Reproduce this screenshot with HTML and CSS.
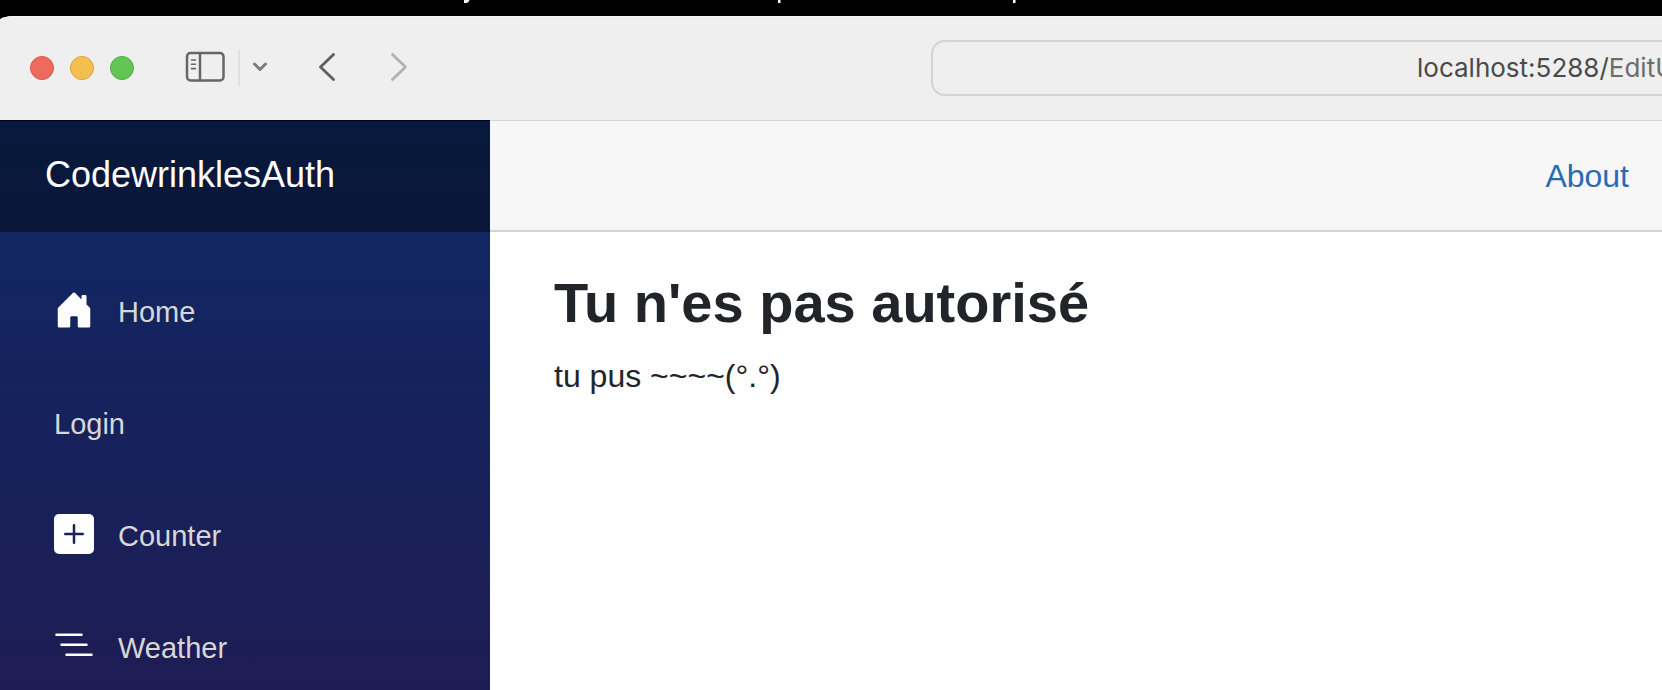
FILE: index.html
```html
<!DOCTYPE html>
<html lang="fr">
<head>
<meta charset="utf-8">
<title>CodewrinklesAuth</title>
<link rel="stylesheet" href="styles.css">
</head>
<body>
<div class="desktop" aria-hidden="true">
  <svg class="desktop-marks" width="600" height="4" viewBox="0 0 600 4" fill="#fff">
    <path d="M4 0h5.500q-1 3-3.500 3H4V1.500Z"/>
    <rect x="318" width="2.500" height="3"/>
    <rect x="553" width="2.500" height="3"/>
  </svg>
</div>
<div class="window">
  <header class="toolbar">
    <div class="lights">
      <button class="light light-close" aria-label="Close"></button>
      <button class="light light-min" aria-label="Minimize"></button>
      <button class="light light-max" aria-label="Zoom"></button>
    </div>
    <button class="tool tool-sidebar" aria-label="Show sidebar">
      <svg width="40" height="32" viewBox="0 0 40 32" fill="none" stroke="#666" stroke-width="2.500" stroke-linecap="round">
        <rect x="2" y="2" width="36.500" height="27.500" rx="3.500"/>
        <path d="M15 2v27.500"/>
        <path stroke-width="1.600" d="M6.500 9h4M6.500 13.300h4M6.500 17.600h4"/>
      </svg>
    </button>
    <span class="divider"></span>
    <button class="tool tool-menu" aria-label="Tab groups">
      <svg width="16" height="12" viewBox="0 0 16 12" fill="none" stroke="#7b7b83" stroke-width="3" stroke-linecap="round" stroke-linejoin="round"><path d="M2.500 3l5.500 5.500L13.500 3"/></svg>
    </button>
    <button class="tool tool-back" aria-label="Back">
      <svg width="18" height="32" viewBox="0 0 18 32" fill="none" stroke="#606060" stroke-width="2.900" stroke-linecap="round" stroke-linejoin="round"><path d="M15.500 3.500L2.500 16l13 12.500"/></svg>
    </button>
    <button class="tool tool-forward" aria-label="Forward" disabled>
      <svg width="18" height="32" viewBox="0 0 18 32" fill="none" stroke="#b2b2b2" stroke-width="2.900" stroke-linecap="round" stroke-linejoin="round"><path d="M2.500 3.500l13 12.500-13 12.500"/></svg>
    </button>
    <button class="address"><span class="host">localhost:5288/</span><span class="path">EditU</span></button>
  </header>
  <div class="page">
    <div class="sidebar">
      <div class="brand-row"><a class="brand" href="#">CodewrinklesAuth</a></div>
      <nav class="nav">
        <a class="nav-link" href="#">
          <svg class="nav-icon" viewBox="0 0 16 16"><path d="M6.500 14.500v-3.505c0-.245.25-.495.5-.495h2c.25 0 .5.25.5.5v3.500a.5.5 0 0 0 .5.5h4a.5.5 0 0 0 .5-.5v-7a.5.5 0 0 0-.146-.354L13 5.793V2.500a.5.5 0 0 0-.5-.5h-1a.5.5 0 0 0-.5.5v1.293L8.354 1.146a.5.5 0 0 0-.708 0l-6 6A.5.5 0 0 0 1.500 7.500v7a.5.5 0 0 0 .5.5h4a.5.5 0 0 0 .5-.5Z"/></svg>
          <span>Home</span>
        </a>
        <a class="nav-link" href="#"><span>Login</span></a>
        <a class="nav-link" href="#">
          <svg class="nav-icon" viewBox="0 0 16 16"><path d="M2 0a2 2 0 0 0-2 2v12a2 2 0 0 0 2 2h12a2 2 0 0 0 2-2V2a2 2 0 0 0-2-2H2zm6.500 4.500v3h3a.5.5 0 0 1 0 1h-3v3a.5.5 0 0 1-1 0v-3h-3a.5.5 0 0 1 0-1h3v-3a.5.5 0 0 1 1 0z"/></svg>
          <span>Counter</span>
        </a>
        <a class="nav-link" href="#">
          <svg class="nav-icon" viewBox="0 0 16 16"><path d="M4.500 11.500A.5.5 0 0 1 5 11h10a.5.5 0 0 1 0 1H5a.5.5 0 0 1-.5-.5zm-2-4A.5.5 0 0 1 3 7h10a.5.5 0 0 1 0 1H3a.5.5 0 0 1-.5-.5zm-2-4A.5.5 0 0 1 1 3h10a.5.5 0 0 1 0 1H1a.5.5 0 0 1-.5-.5z"/></svg>
          <span>Weather</span>
        </a>
      </nav>
    </div>
    <main class="main">
      <div class="top-row"><a class="about" href="#">About</a></div>
      <article class="content">
        <h1 class="title">Tu n'es pas autorisé</h1>
        <p class="text">tu pus ~~~~(°.°)</p>
      </article>
    </main>
  </div>
</div>
</body>
</html>
```
FILE: styles.css
```css
* {
  box-sizing: border-box;
}

body {
  margin: 0;
  height: 100vh;
  overflow: hidden;
  display: flex;
  flex-direction: column;
  background: #000;
  font-family: "Liberation Sans", Arial, sans-serif;
  font-size: 32px;
  color: #212529;
}

button {
  padding: 0;
  border: 0;
  background: none;
  font: inherit;
}

a {
  text-decoration: none;
}

svg {
  display: block;
}

.desktop {
  height: 16px;
  flex: none;
  padding-left: 460px;
  overflow: hidden;
}

.window {
  flex: 1;
  min-height: 0;
  display: flex;
  flex-direction: column;
  background: #fff;
  border-top-left-radius: 16px 4px;
  overflow: hidden;
}

.toolbar {
  flex: none;
  height: 104px;
  display: flex;
  align-items: center;
  padding-left: 30px;
  background: #efefef;
  box-shadow: inset 0 1px #f8f8f8;
}

.lights {
  display: flex;
  gap: 16px;
}

.light {
  width: 24px;
  height: 24px;
  border-radius: 50%;
}

.light-close {
  background: #ed6a5e;
  border: 1px solid #d9564b;
}

.light-min {
  background: #f5bf4f;
  border: 1px solid #d9a23d;
}

.light-max {
  background: #62c655;
  border: 1px solid #4fac41;
}

.tool {
  flex: none;
  padding-bottom: 2px;
}

.tool-sidebar {
  margin-left: 51px;
}

.divider {
  width: 2px;
  height: 36px;
  margin: 0 12px 0 13px;
  background: #dfdfdf;
}

.tool-back {
  margin-left: 50px;
}

.tool-forward {
  margin-left: 54px;
}

.address {
  flex: 1;
  min-width: 0;
  height: 56px;
  margin-left: 523px;
  padding-left: 484px;
  display: flex;
  align-items: center;
  overflow: hidden;
  border: 2px solid #d2d2d2;
  border-right: 0;
  border-radius: 14px 0 0 14px;
  font-family: Inter, sans-serif;
  font-size: 26px;
  line-height: 32px;
  white-space: nowrap;
}

.host {
  color: #4a4a4a;
}

.path {
  color: #6c6c6c;
}

.page {
  flex: 1;
  min-height: 0;
  display: flex;
}

.sidebar {
  flex: none;
  width: 490px;
  background: linear-gradient(180deg, #0c2a64 0%, #122661 22%, #1e1c54 100%);
}

.brand-row {
  height: 112px;
  display: flex;
  align-items: center;
  padding-left: 45px;
  box-shadow: inset 0 1px #000317;
  background: rgba(0, 0, 0, 0.4);
}

.brand {
  padding-bottom: 2px;
  font-size: 36px;
  line-height: 48px;
  color: #fff;
}

.nav {
  display: flex;
  flex-direction: column;
  gap: 16px;
  padding: 32px 24px 0;
}

.nav-link {
  height: 96px;
  flex: none;
  display: flex;
  align-items: center;
  gap: 24px;
  padding-left: 30px;
  font-size: 29px;
  line-height: 96px;
  color: #d7d7d7;
}

.nav-icon {
  width: 40px;
  height: 40px;
  margin-bottom: 4px;
  fill: #fff;
}

.main {
  flex: 1;
  min-width: 0;
}

.top-row {
  height: 112px;
  display: flex;
  align-items: center;
  justify-content: flex-end;
  padding-right: 33px;
  background: #f7f7f7;
  border-top: 1px solid #d4d4d4;
  border-bottom: 2px solid #d4d4d4;
}

.about {
  line-height: 48px;
  color: #286bb5;
}

.content {
  padding: 37px 64px;
}

.title {
  margin: 0 0 15px;
  font-size: 56px;
  line-height: 68px;
}

.text {
  margin: 0;
  line-height: 48px;
}
```
